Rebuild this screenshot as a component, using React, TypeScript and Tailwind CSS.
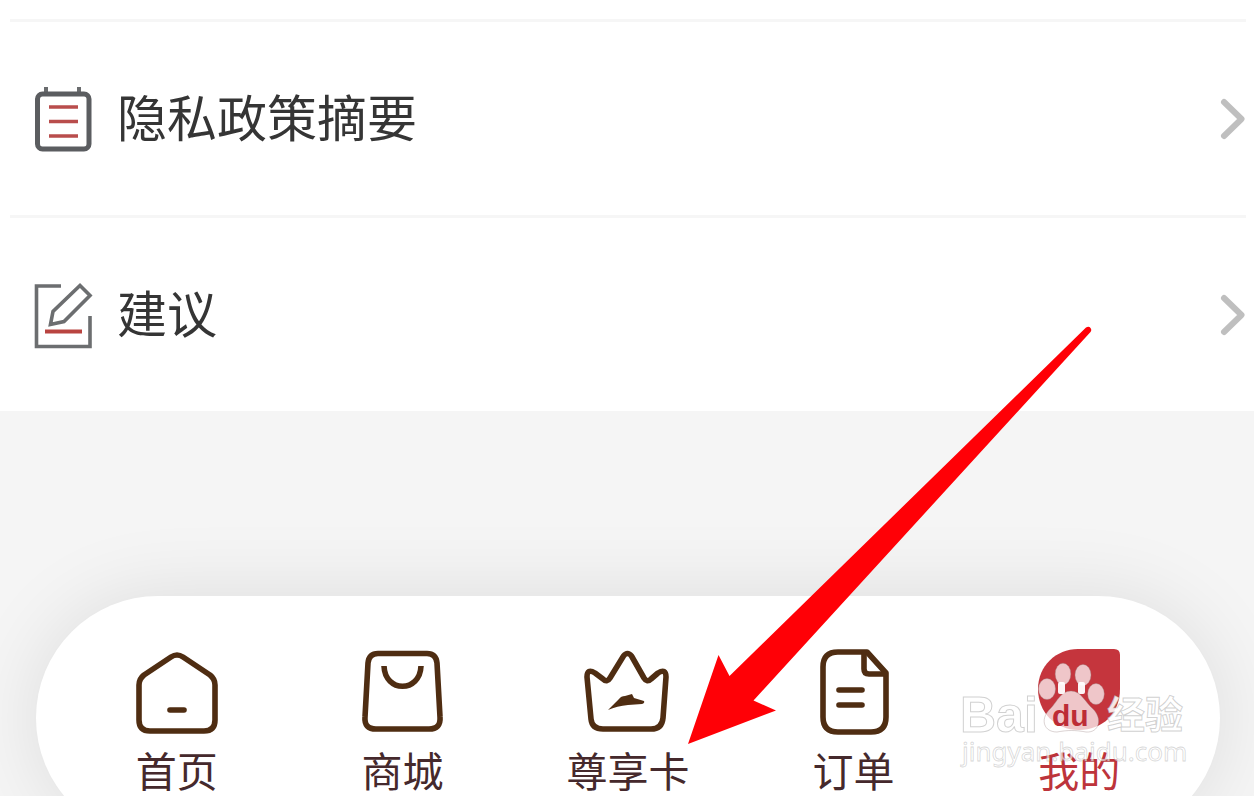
import type { ReactNode } from "react";

function PolicyIcon() {
  return (
    <svg width="60" height="68" viewBox="0 0 60 68" fill="none" aria-hidden="true">
      <path d="M13 2V9M46 2V9" stroke="#6a6c6e" strokeWidth="4" />
      <rect x="4.5" y="9" width="51.5" height="55" rx="5" stroke="#5b5d60" strokeWidth="5" />
      <path d="M16 22H45M16 36.500H45M16 51H45" stroke="#b94d4c" strokeWidth="3.6" />
    </svg>
  );
}

function SuggestIcon() {
  return (
    <svg width="60" height="68" viewBox="0 0 60 68" fill="none" aria-hidden="true">
      <path d="M28 5H3.500V65.500H57V35" stroke="#6c6e70" strokeWidth="3.6" />
      <path d="M47 4.500L57 14.500L31 40.500L17.500 43.500L20 30.500Z" stroke="#6c6e70" strokeWidth="3.6" />
      <path d="M12 50.500H49" stroke="#b94440" strokeWidth="4.2" />
    </svg>
  );
}

function Chevron() {
  return (
    <svg width="28" height="44" viewBox="0 0 28 44" fill="none" aria-hidden="true">
      <path d="M6 5L23.500 22L6 39" stroke="#bfbfbf" strokeWidth="6" strokeLinecap="round" strokeLinejoin="round" />
    </svg>
  );
}

function NavIcon({ children }: { children: ReactNode }) {
  return (
    <svg
      width="90"
      height="90"
      viewBox="0 0 90 90"
      fill="none"
      stroke="#4f2d12"
      strokeWidth="5.6"
      strokeLinecap="round"
      strokeLinejoin="round"
      aria-hidden="true"
    >
      {children}
    </svg>
  );
}

const rows = [
  { label: "隐私政策摘要", icon: <PolicyIcon /> },
  { label: "建议", icon: <SuggestIcon /> },
];

const tabs = [
  {
    label: "首页",
    active: false,
    icon: (
      <NavIcon>
        <path d="M39 11Q45 7 51 11L78 29Q83 33 83 39V74Q83 85 72 85H18Q7 85 7 74V39Q7 33 12 29Z" />
        <path d="M38 64H52" />
      </NavIcon>
    ),
  },
  {
    label: "商城",
    active: false,
    icon: (
      <NavIcon>
        <path d="M21 7.500H70Q79 7.500 80 17L83 71Q84 83 72 83H19Q7 83 8 71L11 17Q12 7.500 21 7.500Z" />
        <path d="M27 20C28 47 63 47 64 20" strokeLinecap="butt" />
      </NavIcon>
    ),
  },
  {
    label: "尊享卡",
    active: false,
    icon: (
      <NavIcon>
        <path d="M40.500 10Q44.500 5 48.500 10L61 32Q64 37 68 33L75 27Q83 22 83 31L80 72Q79 83 68 83H20Q9 83 8 73L4 31Q4 22 12 27L20 33Q24 37 27 32Z" />
        <path
          d="M25 64L36 53Q38 50 42 50L49 48L51 52L61 55Q62 57 59 58L45 59Q34 60 25 64Z"
          fill="#4f2d12"
          stroke="none"
        />
      </NavIcon>
    ),
  },
  {
    label: "订单",
    active: false,
    icon: (
      <NavIcon>
        <path d="M58 6H29Q14 6 14 21V71Q14 86 29 86H62Q77 86 77 71V27Z" />
        <path d="M55 7V23Q55 28 60 28H76" />
        <path d="M30 44H53M30 59H53" />
      </NavIcon>
    ),
  },
  {
    label: "我的",
    active: true,
    icon: (
      <NavIcon>
        <path
          d="M44 3H80Q86 3 86 9V43C86 68 68 84 45 84C21 84 4 66 4 43C4 20 22 3 44 3Z"
          fill="#c5353d"
          stroke="none"
        />
      </NavIcon>
    ),
  },
];

function Watermark() {
  return (
    <svg
      className="pointer-events-none absolute top-[655px] left-[958px]"
      width="236"
      height="120"
      viewBox="0 0 236 120"
      role="img"
      aria-label="Baidu 经验"
    >
      <g fill="#ffffff" fillOpacity="0.72" stroke="#9a8585" strokeOpacity="0.45" strokeWidth="0.8">
        <ellipse cx="89" cy="34" rx="8.500" ry="10.500" />
        <ellipse cx="105" cy="19" rx="7.800" ry="10.800" />
        <ellipse cx="125" cy="20" rx="8" ry="10.600" />
        <ellipse cx="138" cy="39" rx="8.300" ry="10.500" />
        <path d="M113 36C123 36 127 47 135 54C145 64 141 78 128 77C117 75 110 75 99 77C86 77 82 65 91 55C99 48 102 36 113 36Z" />
      </g>
      <g fill="#ffffff" fillOpacity="0.95">
        <rect x="100" y="27" width="7" height="12" rx="2" />
        <rect x="120" y="27" width="7" height="12" rx="2" />
      </g>
      <g
        className="font-['Liberation_Sans','Noto_Sans_CJK_SC',sans-serif] font-bold"
        fill="#ffffff"
        fillOpacity="0.9"
        stroke="#999999"
        strokeOpacity="0.45"
        strokeWidth="1"
      >
        <text x="2" y="77" fontSize="50">Bai</text>
        <text x="149" y="73" fontSize="38">经验</text>
      </g>
      <text
        className="font-['Liberation_Sans',sans-serif] font-bold"
        x="94"
        y="71"
        fontSize="30"
        fill="#bd2c36"
      >
        du
      </text>
      <text
        className="font-['Noto_Sans',sans-serif]"
        x="4"
        y="106"
        fontSize="26"
        fill="#ffffff"
        fillOpacity="0.65"
        stroke="#999999"
        strokeOpacity="0.4"
        strokeWidth="0.8"
      >
        jingyan.baidu.com
      </text>
    </svg>
  );
}

export default function App() {
  return (
    <div className="relative flex h-screen flex-col overflow-hidden bg-[#f5f5f5] font-['Noto_Sans_CJK_SC',sans-serif]">
      <main className="shrink-0 bg-white pt-[19px]">
        <ul className="mr-2 ml-[10px]">
          {rows.map((row) => (
            <li key={row.label} className="border-t-[3px] border-[#f6f6f6]">
              <a href="#" className="flex h-[193px] items-center gap-6 pl-[23px] text-[50px] leading-none text-[#353535]">
                {row.icon}
                <span className="flex-1 pb-2">{row.label}</span>
                <Chevron />
              </a>
            </li>
          ))}
        </ul>
      </main>

      <nav
        aria-label="主导航"
        className="mt-[185px] mr-[34px] ml-9 flex h-[244px] shrink-0 rounded-full bg-white px-7 pt-[50px] shadow-[0_0_80px_rgba(0,0,0,0.1)]"
      >
        {tabs.map((tab) => (
          <a
            key={tab.label}
            href="#"
            aria-current={tab.active ? "page" : undefined}
            className={
              tab.active
                ? "flex flex-1 flex-col items-center gap-[13px] text-[41px] leading-none text-[#bd343b]"
                : "flex flex-1 flex-col items-center gap-[13px] text-[41px] leading-none text-[#45292c]"
            }
          >
            {tab.icon}
            <span>{tab.label}</span>
          </a>
        ))}
      </nav>

      <Watermark />

      <svg
        className="pointer-events-none absolute top-[320px] left-[680px]"
        width="420"
        height="430"
        viewBox="680 320 420 430"
        aria-hidden="true"
      >
        <path
          d="M688 744L718.500 655L729.500 676L1086 327.500Q1089 326 1090.500 328Q1092 330 1090.500 332L753.500 700.500L776 710.500Z"
          fill="#ff0006"
        />
      </svg>
    </div>
  );
}
